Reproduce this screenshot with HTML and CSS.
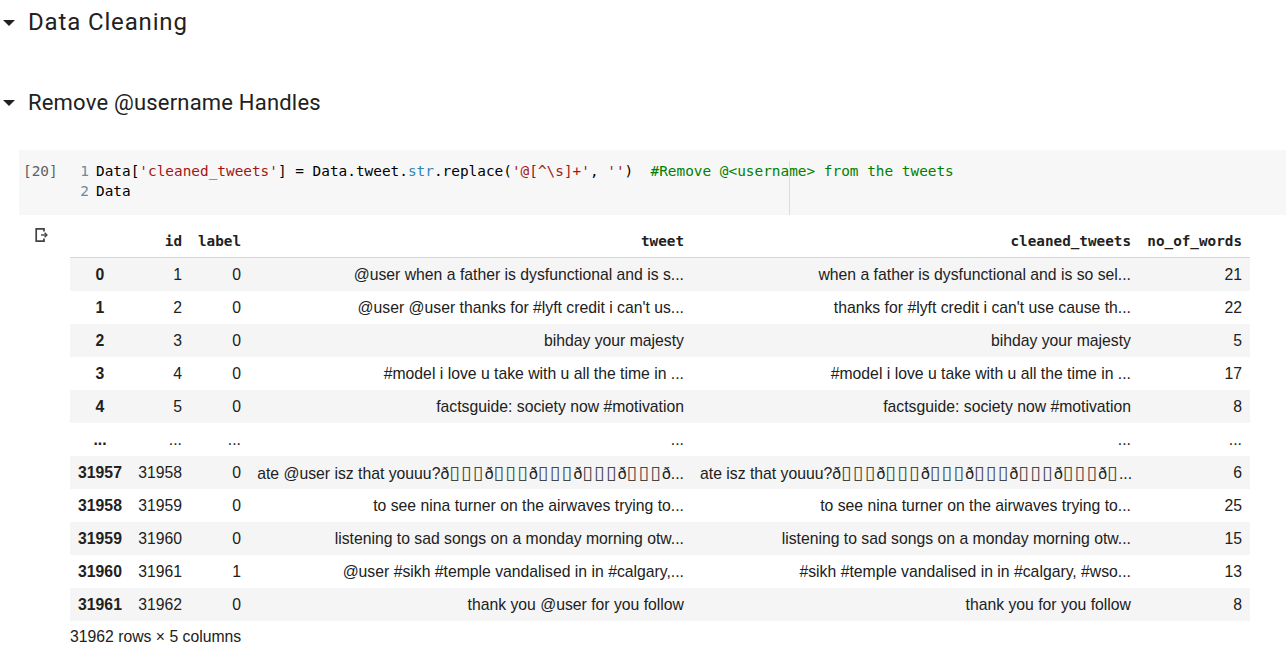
FILE: index.html
```html
<!DOCTYPE html>
<html>
<head>
<meta charset="utf-8">
<link rel="stylesheet" href="styles.css">
</head>
<body>
<div class="notebook">
  <div class="md-head">
    <span class="caret"></span>
    <span class="md-title md-title-1">Data Cleaning</span>
  </div>
  <div class="md-head md-head-2">
    <span class="caret"></span>
    <span class="md-title md-title-2">Remove @username Handles</span>
  </div>

  <div class="cell">
    <div class="code">
      <div class="prompt">[20]</div>
      <div class="editor">
        <div class="line"><span class="ln">1</span><span class="src">Data[<span class="s">'cleaned_tweets'</span>] = Data.tweet.<span class="b">str</span>.replace(<span class="s">'@[^\s]+'</span>, <span class="s">''</span>)  <span class="c">#Remove @&lt;username&gt; from the tweets</span></span></div>
        <div class="line"><span class="ln">2</span><span class="src">Data</span></div>
        <div class="ruler"></div>
      </div>
    </div>

    <div class="output">
      <div class="out-icon">
        <svg width="16" height="16" viewBox="0 0 16 16" fill="none" stroke="#424242">
          <path d="M10 4.5V1.8H2.2V14.2H10V11.5" stroke-width="1.7"/>
          <path d="M7 8H12.6" stroke-width="1.4"/>
          <path d="M10.6 5.8L12.9 8L10.6 10.2" stroke-width="1.4"/>
        </svg>
      </div>
      <div class="out-body">
        <table class="df">
          <colgroup>
            <col class="c-idx"><col class="c-id"><col class="c-label"><col class="c-tweet"><col class="c-clean"><col class="c-words">
          </colgroup>
          <thead>
            <tr><th></th><th>id</th><th>label</th><th>tweet</th><th>cleaned_tweets</th><th>no_of_words</th></tr>
          </thead>
          <tbody>
            <tr><th>0</th><td>1</td><td>0</td><td>@user when a father is dysfunctional and is s...</td><td>when a father is dysfunctional and is so sel...</td><td>21</td></tr>
            <tr><th>1</th><td>2</td><td>0</td><td>@user @user thanks for #lyft credit i can't us...</td><td>thanks for #lyft credit i can't use cause th...</td><td>22</td></tr>
            <tr><th>2</th><td>3</td><td>0</td><td>bihday your majesty</td><td>bihday your majesty</td><td>5</td></tr>
            <tr><th>3</th><td>4</td><td>0</td><td>#model i love u take with u all the time in ...</td><td>#model i love u take with u all the time in ...</td><td>17</td></tr>
            <tr><th>4</th><td>5</td><td>0</td><td>factsguide: society now #motivation</td><td>factsguide: society now #motivation</td><td>8</td></tr>
            <tr><th>...</th><td>...</td><td>...</td><td>...</td><td>...</td><td>...</td></tr>
            <tr><th>31957</th><td>31958</td><td>0</td><td>ate @user isz that youuu?ð<span class="tofu">▯▯▯</span>ð<span class="tofu">▯▯▯</span>ð<span class="tofu">▯▯▯</span>ð<span class="tofu">▯▯▯</span>ð<span class="tofu">▯▯▯</span>ð...</td><td>ate isz that youuu?ð<span class="tofu">▯▯▯</span>ð<span class="tofu">▯▯▯</span>ð<span class="tofu">▯▯▯</span>ð<span class="tofu">▯▯▯</span>ð<span class="tofu">▯▯▯</span>ð<span class="tofu">▯▯▯</span>ð<span class="tofu">▯</span>...</td><td>6</td></tr>
            <tr><th>31958</th><td>31959</td><td>0</td><td>to see nina turner on the airwaves trying to...</td><td>to see nina turner on the airwaves trying to...</td><td>25</td></tr>
            <tr><th>31959</th><td>31960</td><td>0</td><td>listening to sad songs on a monday morning otw...</td><td>listening to sad songs on a monday morning otw...</td><td>15</td></tr>
            <tr><th>31960</th><td>31961</td><td>1</td><td>@user #sikh #temple vandalised in in #calgary,...</td><td>#sikh #temple vandalised in in #calgary, #wso...</td><td>13</td></tr>
            <tr><th>31961</th><td>31962</td><td>0</td><td>thank you @user for you follow</td><td>thank you for you follow</td><td>8</td></tr>
          </tbody>
        </table>
        <div class="shape">31962 rows × 5 columns</div>
      </div>
    </div>
  </div>
</div>
</body>
</html>
```

FILE: styles.css
```css
html, body {
  margin: 0;
  padding: 0;
  background: #ffffff;
}

body {
  font-family: "Liberation Sans", "DejaVu Sans", Arial, sans-serif;
  color: #212121;
}

.notebook {
  display: flex;
  flex-direction: column;
}

.md-head {
  display: flex;
  align-items: center;
  height: 44px;
  padding-left: 3px;
}

.md-head-2 {
  margin-top: 36px;
}

.caret {
  width: 0;
  height: 0;
  border-left: 6px solid transparent;
  border-right: 6px solid transparent;
  border-top: 6px solid #212121;
  margin-top: 2px;
  margin-right: 13px;
}

.md-title {
  font-family: Roboto, "Liberation Sans", sans-serif;
  color: #212121;
}

.md-title-1 {
  font-size: 24px;
  letter-spacing: 0.85px;
}

.md-title-2 {
  font-size: 22px;
  letter-spacing: 0.2px;
}

.cell {
  margin-top: 26px;
  display: flex;
  flex-direction: column;
}

.code {
  margin-left: 19px;
  background: #f7f7f7;
  height: 65px;
  box-sizing: border-box;
  padding-top: 11px;
  display: flex;
  font-family: "DejaVu Sans Mono", "Liberation Mono", monospace;
  font-size: 14.4px;
  line-height: 20px;
}

.prompt {
  width: 57px;
  padding-left: 4px;
  color: #616161;
  flex: none;
}

.editor {
  position: relative;
  flex: 1;
}

.line {
  display: flex;
  white-space: pre;
  color: #000000;
}

.ln {
  width: 9px;
  margin-right: 7px;
  text-align: right;
  color: #6b8aa3;
}

.s { color: #a31515; }
.b { color: #2f86b8; }
.c { color: #008000; }

.ruler {
  position: absolute;
  left: 709px;
  top: 0;
  bottom: 0;
  width: 1px;
  background: #dcdcdc;
}

.output {
  display: flex;
  padding-top: 9px;
}

.out-icon {
  width: 70px;
  flex: none;
  box-sizing: border-box;
  padding-left: 34px;
  padding-top: 3px;
}

.out-icon svg {
  display: block;
}

.out-body {
  display: flex;
  flex-direction: column;
}

.df {
  border-collapse: collapse;
  table-layout: fixed;
  width: 1180px;
  font-size: 15.75px;
  color: #212121;
}

.c-idx { width: 60px; }
.c-id { width: 60px; }
.c-label { width: 59px; }
.c-tweet { width: 443px; }
.c-clean { width: 447px; }
.c-words { width: 111px; }

.df thead th {
  height: 33px;
  padding: 0 8px;
  text-align: right;
  font-family: "DejaVu Sans Mono", "Liberation Mono", monospace;
  font-size: 14.3px;
  font-weight: bold;
  color: #212121;
  border-bottom: 1px solid #d6d6d6;
  vertical-align: middle;
}

.df tbody tr:nth-child(odd) {
  background: #f5f5f5;
}

.df tbody th,
.df tbody td {
  height: 33px;
  padding: 0 8px;
  white-space: nowrap;
  overflow: hidden;
  vertical-align: middle;
}

.df tbody th {
  text-align: center;
  font-weight: bold;
}

.df tbody td {
  text-align: right;
}

.tofu {
  font-family: "DejaVu Sans", sans-serif;
  font-size: 19px;
  line-height: 1;
  letter-spacing: 1.4px;
  color: #444444;
}

.shape {
  margin-top: 6px;
  line-height: 20px;
  font-size: 15.75px;
  color: #212121;
}
```
